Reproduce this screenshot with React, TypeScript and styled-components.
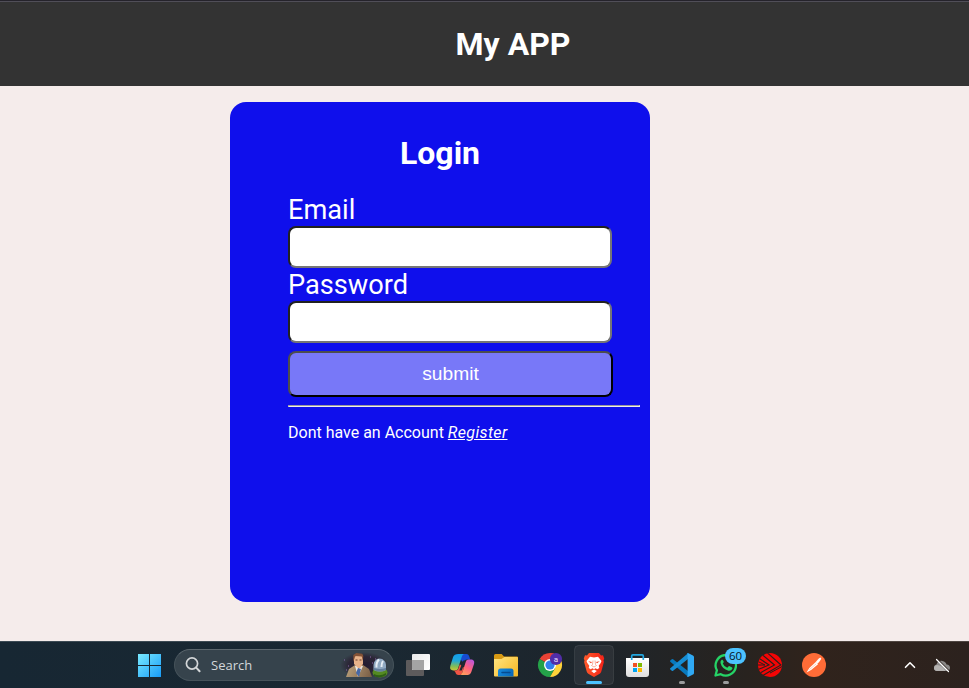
import React from "react";
import styled, { createGlobalStyle } from "styled-components";

const GlobalStyle = createGlobalStyle`
  * { box-sizing: border-box; }
  body { margin: 0; background: #f5eceb; font-family: Roboto, sans-serif; overflow: hidden; }
`;

const Screen = styled.div`
  width: 969px;
  height: 688px;
  display: flex;
  flex-direction: column;
`;

const Header = styled.header`
  height: 86px;
  flex: none;
  border-top: 1px solid #25232b;
  background: linear-gradient(#504e58 0 1px, #333333 1px);
  display: flex;
  justify-content: center;
  padding: 24px 0 0 57px;
`;

const Brand = styled.h1`
  margin: 0;
  font-size: 32px;
  line-height: 38px;
  font-weight: 700;
  color: #fff;
`;

const Main = styled.main`
  flex: 1;
  padding: 16px 0 0 230px;
`;

const Card = styled.section`
  width: 420px;
  height: 500px;
  border-radius: 16px;
  background: #0f0fec;
  color: #fff;
  padding-top: 32px;
`;

const Title = styled.h2`
  margin: 0 0 20px;
  font-size: 32px;
  line-height: 38px;
  text-align: center;
`;

const Form = styled.form`
  padding: 0 10px 0 58px;
  display: flex;
  flex-direction: column;
  align-items: flex-start;
`;

const Label = styled.label<{ $height: number; $line: number }>`
  font-size: 27.2px;
  line-height: ${(p) => p.$line}px;
  height: ${(p) => p.$height}px;
`;

const Input = styled.input`
  width: 324px;
  height: 42px;
  border: 2px solid;
  border-color: #212121 #767676 #767676 #212121;
  border-radius: 8px;
  background: #fff;
  outline: none;
`;

const Submit = styled.button`
  width: 325px;
  height: 46px;
  margin-top: 8px;
  padding: 0;
  border: 2px solid;
  border-color: #4d4d4d #000 #000 #4d4d4d;
  border-radius: 8px;
  background: #7878f8;
  color: #fff;
  font: 19.2px "Liberation Sans", Arial, sans-serif;
`;

const Divider = styled.hr`
  width: 100%;
  height: 2px;
  margin: 8px 0 16px;
  border: 1px solid;
  border-color: #9a9a9a #eee #eee #9a9a9a;
`;

const Note = styled.p`
  margin: 0;
  font-size: 16px;
  line-height: 19px;
`;

const Register = styled.a`
  color: #fff;
  font-style: italic;
  text-decoration: underline;
  letter-spacing: 0.35px;
`;

const Taskbar = styled.footer`
  height: 47px;
  flex: none;
  display: flex;
  align-items: stretch;
  padding: 0 11px 0 127px;
  background: linear-gradient(rgba(255, 255, 255, 0.16) 0 1px, transparent 1px),
    linear-gradient(90deg, #172733 0%, #1a2832 40%, #1d252c 60%, #28231f 77%, #30231c 84%, #2c221e 100%);
`;

const Tile = styled.div<{ $active?: boolean }>`
  width: 44px;
  height: 47px;
  padding: 4px 2px;
  svg { display: block; margin: -4px -2px; position: relative; }
`;

const Search = styled.div`
  width: 220px;
  height: 32px;
  margin: 8px 2px 0 3px;
  border-radius: 16px;
  border: 1px solid #45525a;
  border-top-color: #5c676e;
  background: #36434c;
  display: flex;
  align-items: center;
  padding-left: 10px;
  color: #d3d7da;
  font: 13px "Open Sans", "Noto Sans", sans-serif;
  overflow: hidden;
`;

const SearchText = styled.span`
  margin-left: 9px;
  flex: 1;
`;

const Tray = styled.div`
  display: flex;
  margin-left: auto;
`;

const Icon = ({ children, w = 44 }: { children: React.ReactNode; w?: number }) => (
  <svg width={w} height="47" viewBox={`0 0 ${w} 47`} fill="none">{children}</svg>
);

const Windows = () => (
  <Icon>
    <defs>
      <linearGradient id="win" x1="11" y1="13" x2="34" y2="36" gradientUnits="userSpaceOnUse">
        <stop stopColor="#79eaff" /><stop offset="1" stopColor="#189cf8" />
      </linearGradient>
    </defs>
    <path fill="url(#win)" d="M11 13h11v11H11zM23 13h11v11H23zM11 25h11v11H11zM23 25h11v11H23z" />
  </Icon>
);

const Magnifier = () => (
  <svg width="17" height="18" viewBox="0 0 17 18" fill="none" stroke="#d3d6d8" strokeWidth="1.7">
    <circle cx="7" cy="7.5" r="5.6" />
    <path d="M11.2 11.6l3.400 3.600" strokeWidth="2" strokeLinecap="round" />
  </svg>
);

const Highlight = () => (
  <svg width="54" height="30" viewBox="0 0 54 30" fill="none">
    <defs>
      <radialGradient id="night"><stop stopColor="#241b30" /><stop offset=".65" stopColor="#2c2637" /><stop offset="1" stopColor="#36434c" /></radialGradient>
      <linearGradient id="coat" x1="10" y1="17" x2="33" y2="27" gradientUnits="userSpaceOnUse"><stop stopColor="#b49a76" /><stop offset="1" stopColor="#765b43" /></linearGradient>
    </defs>
    <ellipse cx="25" cy="15" rx="24" ry="13" fill="url(#night)" />
    <path d="M5 10h1M9 16h1M31 7h1M36 9h1M33 13h1M7 20h1" stroke="#8c6aae" />
    <path d="M7 27l3-8 6-4h8l6 4 3 8z" fill="url(#coat)" />
    <path d="M16 16l3 11 5-11z" fill="#eee8df" />
    <path d="M19 18l3 1-2 8-3-4z" fill="#4668a6" />
    <path d="M15 7q5-4 9 0v7l-3 4h-2l-4-4z" fill="#e7b28a" />
    <path d="M14.300 12V5l3-2 6 .8 1 2.200-.5 5-1-4.500-6.500-.5z" fill="#845236" />
    <path d="M16.500 10h2M20.500 10h2" stroke="#6b3d2a" />
    <ellipse cx="41" cy="22.500" rx="7.500" ry="5" fill="#548a22" />
    <path d="M35 24q6 3 12-1v2q-6 4-12 1z" fill="#2e6015" />
    <path d="M34.500 20v-5q.5-6 6-6.500 6 .5 6.500 6.500v5q-6 3-12.500 0z" fill="#90a9c2" />
    <path d="M35 18q6 2 12 0v2q-6 3-12 0z" fill="#647f9d" />
    <path d="M40 9.500q-3 3-2.500 8M44 11q-1.500 2-1.500 6" stroke="#e5edf5" strokeWidth="2" />
  </svg>
);

const TaskView = () => (
  <Icon>
    <defs><linearGradient id="tv" x1="16" y1="13" x2="34" y2="29" gradientUnits="userSpaceOnUse"><stop stopColor="#e9e9e9" /><stop offset="1" stopColor="#fff" /></linearGradient></defs>
    <rect x="10" y="19" width="18" height="16" rx="1" fill="#5d5b5c" />
    <rect x="16" y="13" width="18" height="16" rx="1" fill="url(#tv)" />
    <path d="M16 19h12v10H17a1 1 0 0 1-1-1z" fill="#a4a4a4" />
  </Icon>
);

const Copilot = () => (
  <Icon>
    <defs>
      <linearGradient id="ca" x1="14" y1="13" x2="13" y2="32" gradientUnits="userSpaceOnUse"><stop stopColor="#139dea" /><stop offset=".35" stopColor="#20a8d8" /><stop offset=".65" stopColor="#83bd55" /><stop offset="1" stopColor="#f7cf26" /></linearGradient>
      <linearGradient id="cb" x1="33" y1="18" x2="22" y2="35" gradientUnits="userSpaceOnUse"><stop stopColor="#b254e8" /><stop offset=".5" stopColor="#ff627e" /><stop offset="1" stopColor="#ffaa54" /></linearGradient>
    </defs>
    <path d="M19 13h7.2c2 0 2.7 1.3 3.2 3l.8 2.5h-3c-2 0-3 1-3.6 3L21 19z" fill="#174bd0" />
    <path d="M18.5 13h6c-1.5.3-2.3 1.3-2.9 3.3L18.2 27c-.6 1.8-1.4 2.5-3.2 2.5h-1.7c-2.6 0-3.8-1.5-3-4.4l2.8-9c.7-2.1 2.5-3.1 5.4-3.1z" fill="url(#ca)" />
    <path d="M13.8 29.5h2c1.5 0 2.2-.8 2.8-2.5l1.2-3.7 4 3.2-1.4 5c-.5 1.8-1.2 2.5-2.8 2.5h-1c-2 0-2.8-1.3-3.3-3z" fill="#f05445" />
    <path d="M20 34c1.3-.2 2-1.1 2.6-3.2l3.2-10c.5-1.7 1.5-2.4 3-2.4h2c2.7 0 4 1.7 3.2 4.5l-2.7 8c-.8 2.2-2.5 3.1-5.3 3.1z" fill="url(#cb)" />
    <path d="M23.400 19.500h2l-3.600 10h-2.500z" fill="#1d2930" />
  </Icon>
);

const Explorer = () => (
  <Icon>
    <defs>
      <linearGradient id="fold" x1="12" y1="16" x2="32" y2="35" gradientUnits="userSpaceOnUse"><stop stopColor="#ffe37d" /><stop offset="1" stopColor="#f7b927" /></linearGradient>
      <linearGradient id="clip" x1="14" y1="28" x2="29" y2="36" gradientUnits="userSpaceOnUse"><stop stopColor="#178bdd" /><stop offset="1" stopColor="#0765b7" /></linearGradient>
    </defs>
    <path d="M10 14.5Q10 13 11.5 13h6.2L20 15.5h13q1 0 1 1V20H10z" fill="#d89a13" />
    <path d="M10 18h7.5l3-2H33q1 0 1 1v17.5q0 1-1 1H11q-1 0-1-1z" fill="url(#fold)" />
    <path d="M14 35.5V30q0-2.5 2.5-2.5h10.5q2.5 0 2.5 2.5v5.5z" fill="url(#clip)" />
    <path d="M18 31.5h8" stroke="#064b90" strokeWidth="1.5" strokeLinecap="round" />
  </Icon>
);

const Chrome = () => (
  <Icon>
    <path d="M22 24L11.6 18A12 12 0 0 1 32.4 18z" fill="#e94235" />
    <path d="M22 24V12a12 12 0 0 1 10.4 6L34 24z" fill="#e94235" />
    <path d="M11.6 18A12 12 0 0 0 22 36l5.2-9-5.2-3z" fill="#24a249" />
    <path d="M32.4 18A12 12 0 0 1 22 36l5.2-9L22 18z" fill="#ffd33a" />
    <circle cx="22" cy="24" r="6" fill="#fff" />
    <circle cx="22" cy="24" r="4.6" fill="#3281ed" />
    <circle cx="28" cy="18" r="6.1" fill="#512da8" />
    <text x="28" y="20.5" fill="#e6dcff" textAnchor="middle" fontFamily="Roboto" fontSize="8">a</text>
  </Icon>
);

const Brave = () => (
  <Icon>
    <defs><linearGradient id="br" x1="12" y1="24" x2="32" y2="24" gradientUnits="userSpaceOnUse"><stop stopColor="#ff5a2b" /><stop offset="1" stopColor="#f32318" /></linearGradient></defs>
    <rect x="2.500" y="4.500" width="39" height="39" rx="4" fill="#fff" fillOpacity=".06" stroke="#fff" strokeOpacity=".09" />
    <path d="M17 12h10l2 2.400 2-.2 1.200 3.200-.7 2 .4 1.600-2.600 9.600q-.5 1.500-2 2.500L22 36l-5.300-2.900q-1.500-1-2-2.500L12.100 21l.4-1.600-.7-2L13 14.200l2 .2z" fill="url(#br)" />
    <path d="M18 15.800l4 .8 4-.8 3.500 4.200-.8 2-2 2.800.6 2.200-2 1.300-1.800-1-1.500 1-1.500-1-1.800 1-2-1.300.6-2.200-2-2.800-.8-2z" fill="#fff" />
    <path d="M16.200 20.200l3.800.8-1 1.200zM27.800 20.200l-3.800.8 1 1.200z" fill="#f64323" />
    <path d="M21 19.500l-.5 4-1 1 2.500 1.500 2.500-1.500-1-1-.5-4" stroke="#f98a70" strokeWidth=".7" />
    <path d="M19.200 30l2.800-1.500 2.800 1.500-2.800 2.300z" fill="#fff" />
    <rect x="14" y="40" width="16" height="3" rx="1.500" fill="#4cc2ff" />
  </Icon>
);

const Store = () => (
  <Icon>
    <defs><linearGradient id="bag" x1="22" y1="18" x2="22" y2="36" gradientUnits="userSpaceOnUse"><stop stopColor="#fff" /><stop offset="1" stopColor="#dedede" /></linearGradient></defs>
    <path d="M10 17h23v16q0 3-3 3H13q-3 0-3-3z" fill="url(#bag)" />
    <path d="M15.700 19v-4q0-1.200 1.200-1.200h9.200q1.200 0 1.200 1.200v4" stroke="#22a6df" strokeWidth="1.700" />
    <path d="M17 22h4v4h-4z" fill="#f25022" /><path d="M22 22h4v4h-4z" fill="#7fba00" />
    <path d="M17 27h4v4h-4z" fill="#00a4ef" /><path d="M22 27h4v4h-4z" fill="#ffb900" />
  </Icon>
);

const Dot = () => <rect x="19" y="40" width="6" height="3" rx="1.5" fill="#9b9c9d" />;

const VsCode = () => (
  <Icon>
    <path d="M10.300 19.500l1.500-1.300q.7-.5 1.300 0L28 30v5.800L10.300 20.700q-.6-.6 0-1.200z" fill="#0879bd" />
    <path d="M10.300 28.500l1.500 1.300q.7.500 1.300 0L28 18v-5.800L10.300 27.300q-.6.600 0 1.200z" fill="#168dd3" />
    <path d="M28 12l5 2.400q1 .5 1 1.500v16.200q0 1-1 1.500L28 36q-.7.200-1.300-.3.900.3.900-.7V13q0-1-.9-.7.600-.5 1.300-.3z" fill="#2fa9f4" />
    <Dot />
  </Icon>
);

const WhatsApp = () => (
  <Icon>
    <path d="M11.500 34.500l1.400-5.200a10.200 10.200 0 1 1 3.900 3.900z" stroke="#25d366" strokeWidth="2.300" strokeLinejoin="round" />
    <path d="M18 18.500q-2 1.300-1.500 3.500 1.500 6 8 7.700 3 .3 4-2.300.2-1-3.400-2.300-.5 0-1.800 1.700-3.300-1.300-4.500-4.300l1-1.500q-.8-2.500-1.800-2.500z" fill="#25d366" />
    <rect x="21" y="7" width="21" height="16" rx="8" fill="#4cc2ff" />
    <text x="31.500" y="19" fill="#07141d" textAnchor="middle" fontFamily="Open Sans" fontSize="11.500">60</text>
    <Dot />
  </Icon>
);

const Arrows = () => (
  <Icon>
    <defs><clipPath id="disc"><circle cx="22" cy="24" r="12" /></clipPath></defs>
    <circle cx="22" cy="24" r="12" fill="#f40505" />
    <g clipPath="url(#disc)" stroke="#29201e" strokeWidth="1.100">
      <path d="M10 16.500L21 24l-11 4.500M14 13.500L26.500 24 12 32M19 11.500L33 24 14 35" />
      <path d="M9 20l8 4H9M22 32l13-7" strokeWidth="1" />
    </g>
  </Icon>
);

const Postman = () => (
  <Icon>
    <circle cx="22" cy="24" r="12" fill="#ff6c37" />
    <path d="M14.500 31.500l2.800-4.500 6.500-6 2.200 2.200-6.500 5.500z" fill="#fff" />
    <path d="M23.500 21.300l3-3.600 1.800-1.300 1 1.300-1.400 2.300-2.300 2.800z" fill="#fff" />
    <path d="M17.500 28.500l6.500-5.500" stroke="#ffb79c" strokeWidth=".7" />
  </Icon>
);

const Chevron = () => (
  <Icon w={32}>
    <path d="M11.500 26.300L16 21.800l4.500 4.500" stroke="#fff" strokeWidth="1.600" strokeLinecap="round" strokeLinejoin="round" />
  </Icon>
);

const CloudOff = () => (
  <Icon w={32}>
    <path d="M11 30a3.300 3.300 0 0 1-.5-6.500q1.500-4.300 6-3.500 3.300.5 4 3.500 3.500.2 3.500 3.300T21 30z" fill="#8a8887" />
    <path d="M11 24q5 0 8.500 6H11q-3-.5-3-3t3-3z" fill="#b3b1b0" />
    <path d="M11.500 18.500l11.500 11.500" stroke="#2c221e" strokeWidth="1.500" />
    <path d="M10.500 18.500L22.500 30.500" stroke="#fff" strokeWidth="1.200" strokeLinecap="round" />
  </Icon>
);

const apps = [TaskView, Copilot, Explorer, Chrome, Brave, Store, VsCode, WhatsApp, Arrows, Postman];

export default function App() {
  return (
    <Screen>
      <GlobalStyle />
      <Header><Brand>My APP</Brand></Header>
      <Main>
        <Card>
          <Title>Login</Title>
          <Form onSubmit={(e) => e.preventDefault()}>
            <Label htmlFor="email" $height={34} $line={36}>Email</Label>
            <Input id="email" type="email" />
            <Label htmlFor="password" $height={33} $line={34}>Password</Label>
            <Input id="password" type="password" />
            <Submit type="submit">submit</Submit>
            <Divider />
            <Note>Dont have an Account <Register>Register</Register></Note>
          </Form>
        </Card>
      </Main>
      <Taskbar>
        <Tile><Windows /></Tile>
        <Search>
          <Magnifier />
          <SearchText>Search</SearchText>
          <Highlight />
        </Search>
        {apps.map((AppIcon, i) => (
          <Tile key={i}><AppIcon /></Tile>
        ))}
        <Tray><Chevron /><CloudOff /></Tray>
      </Taskbar>
    </Screen>
  );
}
